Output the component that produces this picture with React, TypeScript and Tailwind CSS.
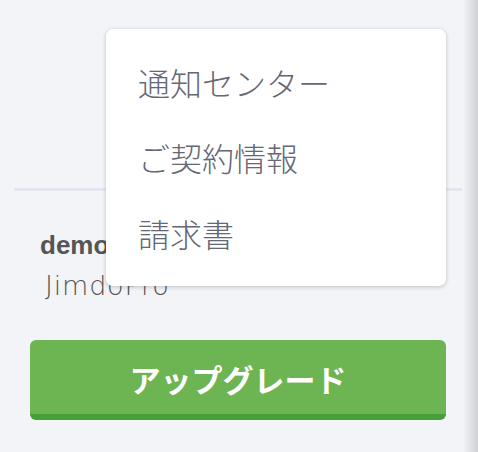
import React from 'react';

const menuItems = ['通知センター', 'ご契約情報', '請求書'];

const jp = { fontFamily: '"Noto Sans CJK JP", "Noto Sans", sans-serif' };

const App: React.FC = () => {
  return (
    <div className="flex h-[452px] w-[478px] overflow-hidden bg-[#f3f4f8]">
      <div className="relative flex w-[464px] flex-col pt-[188px]">
        <div className="ml-[14px] mr-[2px] h-[3px] bg-[#e4e5ee]" />

        <p
          className="mt-[39px] pl-[40px] text-[26px] font-bold leading-[30px] text-[#555555]"
          style={{ fontFamily: '"Liberation Sans", Arial, sans-serif' }}
        >
          demo
        </p>
        <p
          className="mt-[10px] pl-[45px] text-[27px] font-extralight leading-[32px] tracking-[0.8px] text-[#555555]"
          style={{ fontFamily: '"DejaVu Sans", Lato, sans-serif' }}
        >
          JimdoPro
        </p>

        <button
          className="ml-[30px] mt-[38px] flex h-[80px] w-[416px] items-center justify-center rounded-[6px] border-b-[6px] border-[#45a039] bg-[#6cb552] pt-[4px] text-[31px] font-bold text-white"
          style={jp}
        >
          アップグレード
        </button>

        {/* dropdown menu */}
        <div className="absolute left-[106px] top-[29px] flex h-[257px] w-[340px] flex-col rounded-[7px] bg-white pt-[15px] shadow-[0_1px_4px_rgba(0,0,0,0.22)]">
          {menuItems.map((item) => (
            <div
              key={item}
              className="flex h-[75.5px] items-center pl-[32px] text-[32px] font-light text-[#656774]"
              style={jp}
            >
              {item}
            </div>
          ))}
        </div>
      </div>
      <div className="w-[14px] bg-gradient-to-r from-[#f1f2f6] to-[#cfd0d5]" />
    </div>
  );
};

export default App;
